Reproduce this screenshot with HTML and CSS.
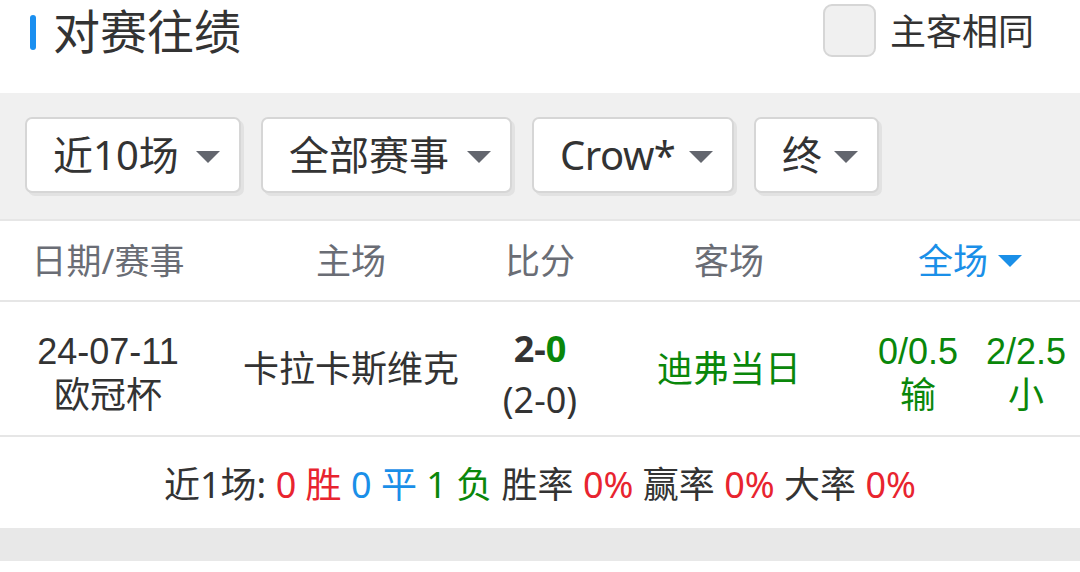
FILE: index.html
```html
<!DOCTYPE html>
<html lang="zh">
<head>
<meta charset="utf-8">
<link rel="stylesheet" href="styles.css">
</head>
<body>
<div class="page">
  <header class="top">
    <div class="title"><span class="bar"></span><span class="title-text">对赛往绩</span></div>
    <label class="same"><span class="check"></span><span class="same-text">主客相同</span></label>
  </header>

  <section class="filters">
    <div class="dd dd1"><span>近10场</span><i class="tri"></i></div>
    <div class="dd dd2"><span>全部赛事</span><i class="tri"></i></div>
    <div class="dd dd3"><span>Crow*</span><i class="tri"></i></div>
    <div class="dd dd4"><span>终</span><i class="tri"></i></div>
  </section>

  <div class="thead">
    <div class="th">日期/赛事</div>
    <div class="th">主场</div>
    <div class="th">比分</div>
    <div class="th">客场</div>
    <div class="th th-span blue">全场 <i class="tri tri-blue"></i></div>
  </div>

  <div class="trow">
    <div class="td two shift"><span>24-07-11</span><span>欧冠杯</span></div>
    <div class="td">卡拉卡斯维克</div>
    <div class="td score shift"><span class="bold">2-<b class="green">0</b></span><span>(2-0)</span></div>
    <div class="td green">迪弗当日</div>
    <div class="td two green shift"><span>0/0.5</span><span>输</span></div>
    <div class="td two green shift"><span>2/2.5</span><span>小</span></div>
  </div>

  <div class="summary">近1场: <span class="red">0 胜</span> <span class="blue">0 平</span> <span class="green">1 负</span> 胜率 <span class="red">0%</span> 赢率 <span class="red">0%</span> 大率 <span class="red">0%</span></div>

  <div class="gap"></div>
</div>
</body>
</html>
```

FILE: styles.css
```css
* { box-sizing: border-box; margin: 0; padding: 0; }
html, body { background: #ffffff; }
body {
  font-family: "Noto Sans", "Noto Sans CJK SC", sans-serif;
  color: #333333;
  width: 1080px;
  height: 572px;
  overflow: hidden;
}

.top {
  height: 93px;
  display: flex;
  align-items: flex-start;
  justify-content: space-between;
  padding: 4px 46px 0 30px;
}
.title { display: flex; align-items: center; gap: 17px; height: 56px; }
.bar {
  width: 6px;
  height: 35px;
  background: #1a8ff0;
  border-radius: 3px;
}
.title-text { font-size: 47px; line-height: 56px; color: #333; margin-top: -2px; }

.same { display: flex; align-items: center; gap: 14px; }
.check {
  width: 53px;
  height: 53px;
  border: 2px solid #d6d6d6;
  background: #f0f0f0;
  border-radius: 9px;
}
.same-text { font-size: 36px; line-height: 44px; color: #333; margin-top: 3px; }

.filters {
  background: #f0f0f0;
  height: 128px;
  padding: 24px 0 0 25px;
  display: flex;
  gap: 20px;
  border-bottom: 2px solid #e6e6e6;
}
.dd {
  height: 76px;
  background: #fff;
  border: 2px solid #d6d6d6;
  border-radius: 7px;
  box-shadow: 3px 3px 0 #e2e2e2;
  display: flex;
  align-items: center;
  justify-content: space-between;
  padding: 0 19px 0 26px;
  font-size: 40px;
  color: #333;
}
.dd1 { width: 216px; }
.dd2 { width: 251px; }
.dd3 { width: 202px; }
.dd4 { width: 125px; }
.dd span { line-height: 50px; white-space: nowrap; }
.dd3 span { letter-spacing: -0.5px; }
.tri {
  display: inline-block;
  width: 0; height: 0;
  border-left: 12px solid transparent;
  border-right: 12px solid transparent;
  border-top: 12px solid #63666e;
  margin-top: 4px;
}
.tri-blue { border-top-color: #1a8fe8; margin-left: 10px; margin-top: 0; }

.thead, .trow {
  display: grid;
  grid-template-columns: 20% 25% 10% 25% 10% 10%;
}
.thead {
  height: 81px;
  border-bottom: 2px solid #e6e6e6;
  align-items: center;
}
.th {
  text-align: center;
  font-size: 35px;
  color: #6a6d75;
  line-height: 44px;
}
.th-span { grid-column: 5 / span 2; display: flex; align-items: center; justify-content: center; padding-right: 4px; }

.trow {
  height: 135px;
  border-bottom: 2px solid #e6e6e6;
  align-items: center;
}
.td {
  text-align: center;
  font-size: 36px;
  line-height: 44px;
  color: #333;
  white-space: nowrap;
}
.two {
  display: flex;
  flex-direction: column;
  align-items: center;
  font-family: "Liberation Sans", "Noto Sans CJK SC", sans-serif;
}
.shift { padding-top: 10px; }
.score { display: flex; flex-direction: column; align-items: center; line-height: 51px; }
.bold { font-weight: 700; }
.bold b { font-weight: 700; }

.summary {
  height: 91px;
  text-align: center;
  font-size: 36px;
  line-height: 91px;
  white-space: pre;
  color: #333;
  padding-top: 2px;
}

.gap { height: 33px; background: #e8e8e8; }

.red { color: #e8242f; }
.blue { color: #1a8fe8; }
.green { color: #0a870a; }
```
